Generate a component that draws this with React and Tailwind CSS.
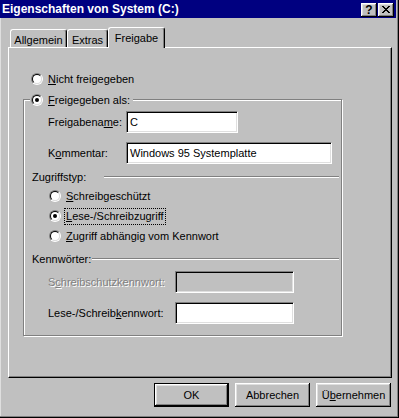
import React from "react";

const BEVEL =
  "shadow-[inset_-1px_-1px_0_#000,inset_1px_1px_0_#fff,inset_-2px_-2px_0_#808080,inset_2px_2px_0_#dfdfdf]";

function Radio({ checked }) {
  return (
    <div className="w-[12px] h-[12px] shrink-0 rounded-full border border-t-[#808080] border-l-[#808080] border-r-white border-b-white">
      <div className="w-full h-full rounded-full border border-t-black border-l-black border-r-[#dfdfdf] border-b-[#dfdfdf] bg-white flex items-center justify-center">
        {checked && <div className="w-[4px] h-[4px] rounded-full bg-black" />}
      </div>
    </div>
  );
}

function Field({ w, value, disabled }) {
  return (
    <div
      className={`h-[22px] ${w} shrink-0 border border-t-[#808080] border-l-[#808080] border-r-white border-b-white shadow-[inset_1px_1px_0_#000,inset_-1px_-1px_0_#dfdfdf] ${
        disabled ? "bg-[#c0c0c0]" : "bg-white"
      } flex items-center pl-[3px] text-black leading-[13px]`}
    >
      {value}
    </div>
  );
}

function Btn({ children, def }) {
  const inner = (
    <div className={`w-full h-full flex items-center justify-center ${BEVEL}`}>
      {children}
    </div>
  );
  return def ? (
    <div className="w-[75px] h-[24px] border border-black">{inner}</div>
  ) : (
    <div className="w-[75px] h-[24px]">{inner}</div>
  );
}

function Etched({ className }) {
  return (
    <div
      className={`h-[2px] border-t border-t-[#808080] border-b border-b-white ${className}`}
    />
  );
}

export default function App() {
  return (
    <div className="w-[399px] h-[418px] bg-[#c0c0c0] font-['Liberation_Sans',Arial,sans-serif] text-[11px] leading-[13px] text-black overflow-hidden shadow-[inset_-1px_-1px_0_#000,inset_-2px_-2px_0_#808080,inset_1px_0_0_#dfdfdf]">
      {/* Title bar */}
      <div className="w-[396px] h-[18px] bg-[#000080] flex justify-between">
        <div className="pl-[2px] pt-[3px] text-white font-bold text-[12px] leading-[13px] whitespace-nowrap">
          Eigenschaften von System (C:)
        </div>
        <div className="flex gap-[1px] pr-[2px] pt-[3px]">
          <div
            className={`w-[16px] h-[14px] bg-[#c0c0c0] ${BEVEL} flex items-center justify-center font-bold text-[12px] leading-[12px] pb-[1px]`}
          >
            ?
          </div>
          <div
            className={`w-[16px] h-[14px] bg-[#c0c0c0] ${BEVEL} flex items-center justify-center pb-[1px]`}
          >
            <svg width="8" height="7" viewBox="0 0 8 7" shapeRendering="crispEdges">
              <path
                d="M0 0h2v1H0z M6 0h2v1H6z M1 1h2v1H1z M5 1h2v1H5z M2 2h4v1H2z M3 3h2v1H3z M2 4h4v1H2z M1 5h2v1H1z M5 5h2v1H5z M0 6h2v1H0z M6 6h2v1H6z"
                fill="#000"
              />
            </svg>
          </div>
        </div>
      </div>

      {/* Tabs */}
      <div className="mt-[9px] ml-[10px] h-[20px] flex items-end">
        <div className="w-[57px] h-[18px] border-l border-t border-r border-l-white border-t-white border-r-black shadow-[inset_-1px_0_0_#808080] rounded-tl-[3px] rounded-tr-[3px] flex justify-center pt-[4px]">
          Allgemein
        </div>
        <div className="w-[41px] h-[18px] border-l border-t border-r border-l-white border-t-white border-r-black shadow-[inset_-1px_0_0_#808080] rounded-tl-[3px] rounded-tr-[3px] flex justify-center pt-[4px]">
          Extras
        </div>
        <div className="relative z-10 w-[57px] h-[21px] mb-[-1px] bg-[#c0c0c0] border-l border-t border-r border-l-white border-t-white border-r-black shadow-[inset_-1px_0_0_#808080] rounded-tl-[3px] rounded-tr-[3px] flex justify-center pt-[4px]">
          Freigabe
        </div>
      </div>

      {/* Panel */}
      <div className="ml-[8px] w-[384px] h-[331px] border border-t-white border-l-white border-r-black border-b-black shadow-[inset_-1px_-1px_0_#808080] flex flex-col">
        <div className="mt-[23px] ml-[22px] h-[16px] flex items-center gap-[5px]">
          <Radio />
          <span>
            <u>N</u>icht freigegeben
          </span>
        </div>

        <div className="relative mt-[12px] ml-[14px] w-[319px] h-[237px] border border-[#808080] shadow-[inset_1px_1px_0_#fff,1px_1px_0_#fff] flex flex-col">
          <div className="absolute left-[6px] top-[-8px] h-[16px] bg-[#c0c0c0] pl-[1px] pr-[3px] flex items-center gap-[5px]">
            <Radio checked />
            <span>
              <u>F</u>reigegeben als:
            </span>
          </div>

          <div className="mt-[11px] pl-[24px] flex items-center">
            <span className="w-[78px] shrink-0">
              Freigabena<u>m</u>e:
            </span>
            <Field w="w-[112px]" value="C" />
          </div>

          <div className="mt-[9px] pl-[24px] flex items-center">
            <span className="w-[78px] shrink-0">
              K<u>o</u>mmentar:
            </span>
            <Field w="w-[206px]" value="Windows 95 Systemplatte" />
          </div>

          <div className="mt-[6px] h-[14px] pl-[8px] pr-[2px] flex items-center">
            <span className="w-[72px] shrink-0 whitespace-nowrap">Zugriffstyp:</span>
            <Etched className="flex-1" />
          </div>

          <div className="mt-[2px] h-[20px] pl-[25px] flex items-center gap-[5px]">
            <Radio />
            <span>
              <u>S</u>chreibgeschützt
            </span>
          </div>
          <div className="h-[20px] pl-[25px] flex items-center gap-[3px]">
            <Radio checked />
            <span className="h-[17px] px-[1px] border border-dotted border-black flex items-center">
              <span>
                <u>L</u>ese-/Schreibzugriff
              </span>
            </span>
          </div>
          <div className="h-[20px] pl-[25px] flex items-center gap-[5px]">
            <Radio />
            <span>
              <u>Z</u>ugriff abhängig vom Kennwort
            </span>
          </div>

          <div className="mt-[6px] h-[14px] pl-[8px] pr-[2px] flex items-center">
            <span className="w-[60px] shrink-0 whitespace-nowrap">Kennwörter:</span>
            <Etched className="flex-1" />
          </div>

          <div className="mt-[5px] pl-[24px] flex items-center">
            <span className="w-[127px] shrink-0 text-[#808080] [text-shadow:1px_1px_0_#fff]">
              S<u>c</u>hreibschutzkennwort:
            </span>
            <Field w="w-[119px]" value="" disabled />
          </div>

          <div className="mt-[9px] pl-[24px] flex items-center">
            <span className="w-[127px] shrink-0">
              Lese-/Schreib<u>k</u>ennwort:
            </span>
            <Field w="w-[119px]" value="" />
          </div>
        </div>
      </div>

      {/* Buttons */}
      <div className="mt-[5px] ml-[154px] flex gap-[6px]">
        <Btn def>OK</Btn>
        <Btn>Abbrechen</Btn>
        <Btn>
          <span>
            Ü<u>b</u>ernehmen
          </span>
        </Btn>
      </div>
    </div>
  );
}
